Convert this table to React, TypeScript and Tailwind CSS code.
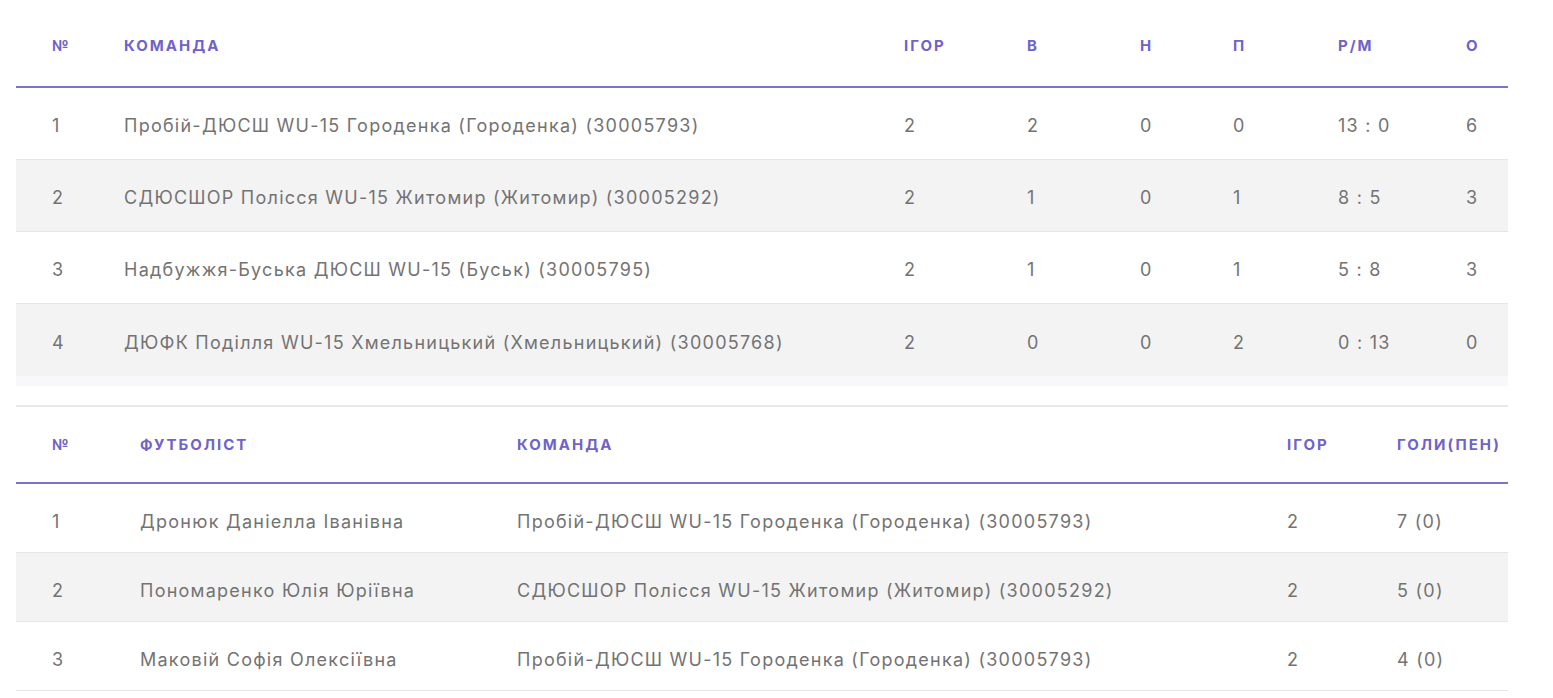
const standings = [
  { n: 1, team: "Пробій-ДЮСШ WU-15 Городенка (Городенка) (30005793)", g: 2, w: 2, d: 0, l: 0, gm: "13 : 0", p: 6 },
  { n: 2, team: "СДЮСШОР Полісся WU-15 Житомир (Житомир) (30005292)", g: 2, w: 1, d: 0, l: 1, gm: "8 : 5", p: 3 },
  { n: 3, team: "Надбужжя-Буська ДЮСШ WU-15 (Буськ) (30005795)", g: 2, w: 1, d: 0, l: 1, gm: "5 : 8", p: 3 },
  { n: 4, team: "ДЮФК Поділля WU-15 Хмельницький (Хмельницький) (30005768)", g: 2, w: 0, d: 0, l: 2, gm: "0 : 13", p: 0 },
];

const scorers = [
  { n: 1, name: "Дронюк Даніелла Іванівна", team: "Пробій-ДЮСШ WU-15 Городенка (Городенка) (30005793)", g: 2, goals: "7 (0)" },
  { n: 2, name: "Пономаренко Юлія Юріївна", team: "СДЮСШОР Полісся WU-15 Житомир (Житомир) (30005292)", g: 2, goals: "5 (0)" },
  { n: 3, name: "Маковій Софія Олексіївна", team: "Пробій-ДЮСШ WU-15 Городенка (Городенка) (30005793)", g: 2, goals: "4 (0)" },
];

const head = "text-[15px] font-bold uppercase tracking-[2px] text-[#6f63c9] whitespace-nowrap";
const cell = "text-[18px] font-normal tracking-[1.25px] text-[#737373] whitespace-nowrap";

const cols1 = "grid grid-cols-[72px_780px_123px_113px_93px_105px_128px_1fr]";
const cols2 = "grid grid-cols-[88px_377px_770px_110px_1fr]";

export default function App() {
  return (
    <div className="w-[1553px] h-[698px] overflow-hidden bg-white font-['Inter',sans-serif]">
      <div className="ml-[16px] w-[1492px]">
        {/* standings */}
        <div className={`${cols1} h-[88px] items-center border-b-2 border-[#7b72c9] pl-[36px] pt-[6px]`}>
          <div className={head}>№</div>
          <div className={head}>Команда</div>
          <div className={head}>Ігор</div>
          <div className={head}>В</div>
          <div className={head}>Н</div>
          <div className={head}>П</div>
          <div className={head}>Р/М</div>
          <div className={head}>О</div>
        </div>
        {standings.map((r, i) => (
          <div
            key={r.n}
            className={`${cols1} h-[72px] items-center pl-[36px] pt-[4px] ${
              i % 2 === 1 ? "bg-[#f3f3f3]" : "bg-white"
            } ${i < 3 ? "border-b border-[#e6e6e6]" : ""}`}
          >
            <div className={cell}>{r.n}</div>
            <div className={cell}>{r.team}</div>
            <div className={cell}>{r.g}</div>
            <div className={cell}>{r.w}</div>
            <div className={cell}>{r.d}</div>
            <div className={cell}>{r.l}</div>
            <div className={cell}>{r.gm}</div>
            <div className={cell}>{r.p}</div>
          </div>
        ))}
        <div className="h-[10px] bg-[#f8f8fa]" />

        {/* scorers */}
        <div className="mt-[19px] border-t-2 border-[#e8e8e8]">
          <div className={`${cols2} h-[77px] items-center border-b-2 border-[#7b72c9] pl-[36px] pt-[2px]`}>
            <div className={head}>№</div>
            <div className={head}>Футболіст</div>
            <div className={head}>Команда</div>
            <div className={head}>Ігор</div>
            <div className={head}>Голи(пен)</div>
          </div>
          {scorers.map((r, i) => (
            <div
              key={r.n}
              className={`${cols2} h-[69px] items-center pl-[36px] pt-[6px] border-b border-[#e6e6e6] ${
                i % 2 === 1 ? "bg-[#f3f3f3]" : "bg-white"
              }`}
            >
              <div className={cell}>{r.n}</div>
              <div className={cell}>{r.name}</div>
              <div className={cell}>{r.team}</div>
              <div className={cell}>{r.g}</div>
              <div className={cell}>{r.goals}</div>
            </div>
          ))}
        </div>
      </div>
    </div>
  );
}
